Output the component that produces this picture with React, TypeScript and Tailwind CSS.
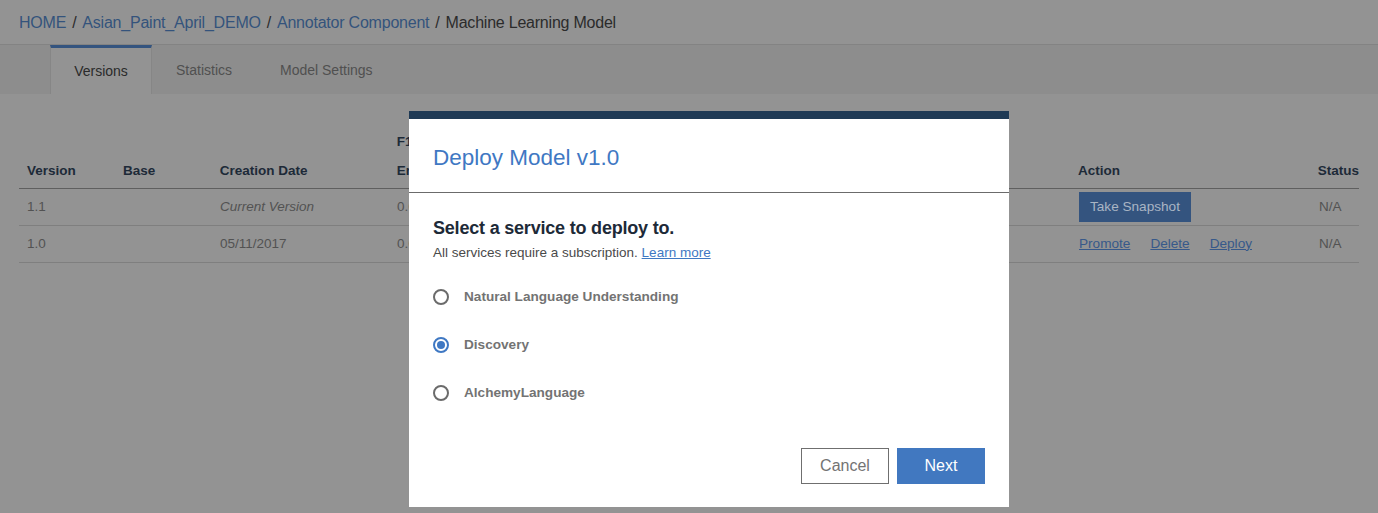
import React from "react";

const font = { fontFamily: '"Liberation Sans", Arial, sans-serif' };

function Radio({ checked, label }: { checked?: boolean; label: string }) {
  return (
    <div className="flex items-center h-[20px]">
      {checked ? (
        <span className="w-[16px] h-[16px] rounded-full border-2 border-[#3f78c3] flex items-center justify-center">
          <span className="w-[8px] h-[8px] rounded-full bg-[#3f78c3]" />
        </span>
      ) : (
        <span className="w-[16px] h-[16px] rounded-full border-2 border-[#6b6b6b]" />
      )}
      <span className="ml-[15px] text-[13.6px] font-bold text-[#737373]">{label}</span>
    </div>
  );
}

export default function App() {
  return (
    <div className="relative w-[1378px] h-[513px] overflow-hidden bg-[#939393]" style={font}>
      {/* breadcrumb */}
      <div className="h-[45px] flex items-center pl-[19px] pt-[2px] text-[16px] tracking-[-0.22px] border-b border-[#838383]">
        <span className="text-[#34537c]">HOME</span>
        <span className="text-[#2b2b2b] mx-[6px]">/</span>
        <span className="text-[#34537c]">Asian_Paint_April_DEMO</span>
        <span className="text-[#2b2b2b] mx-[6px]">/</span>
        <span className="text-[#34537c]">Annotator Component</span>
        <span className="text-[#2b2b2b] mx-[6px]">/</span>
        <span className="text-[#2b2b2b]">Machine Learning Model</span>
      </div>
      {/* tabs */}
      <div className="h-[49px] bg-[#8d8d8d] flex pl-[50px] text-[14px]">
        <div className="w-[102px] bg-[#939393] border-t-[3px] border-[#34547f] border-x border-x-[#868686] flex items-center justify-center pt-[1px] text-[#2a2a2a]">
          Versions
        </div>
        <div className="px-[24px] flex items-center pt-[1px] text-[#505050]">Statistics</div>
        <div className="px-[24px] flex items-center pt-[1px] text-[#505050]">Model Settings</div>
      </div>
      {/* table */}
      <div className="mx-[19px] mt-[38px] text-[13.5px]">
        <div className="flex h-[57px] border-b border-[#5f5f5f] text-[#1d2a38] font-bold">
          <div className="w-[104px] pl-[8px] self-end pb-[7px]">Version</div>
          <div className="w-[97px] self-end pb-[7px]">Base</div>
          <div className="w-[177px] self-end pb-[7px]">Creation Date</div>
          <div className="w-[682px] flex flex-col justify-end pb-[7px] gap-[9px]">
            <span>F1</span>
            <span>Engine</span>
          </div>
          <div className="w-[240px] self-end pb-[7px]">Action</div>
          <div className="self-end pb-[7px]">Status</div>
        </div>
        <div className="flex h-[37px] items-center border-b border-[#7f7f7f] text-[#525252]">
          <div className="w-[104px] pl-[8px]">1.1</div>
          <div className="w-[97px]"></div>
          <div className="w-[177px] italic">Current Version</div>
          <div className="w-[682px]">0.6</div>
          <div className="w-[240px]">
            <span className="inline-flex items-center h-[30px] bg-[#34547f] text-[#a9b5c4] px-[11px] text-[13.6px]">Take Snapshot</span>
          </div>
          <div>N/A</div>
        </div>
        <div className="flex h-[37px] items-center border-b border-[#7f7f7f] text-[#525252]">
          <div className="w-[104px] pl-[8px]">1.0</div>
          <div className="w-[97px]"></div>
          <div className="w-[177px]">05/11/2017</div>
          <div className="w-[682px]">0.6</div>
          <div className="w-[240px] flex gap-[20px] text-[13.6px] text-[#37598a] underline">
            <span>Promote</span>
            <span>Delete</span>
            <span>Deploy</span>
          </div>
          <div>N/A</div>
        </div>
      </div>

      {/* modal */}
      <div className="absolute left-[409px] top-[111px] w-[600px] h-[396px] bg-white border-t-[8px] border-[#1f3a55] flex flex-col">
        <div className="h-[74px] border-b border-[#6b6b6b] flex items-center pl-[24px] pt-[4px]">
          <span className="text-[22.5px] text-[#3f78c3]">Deploy Model v1.0</span>
        </div>
        <div className="pl-[24px] pt-[23px]">
          <div className="text-[18px] tracking-[-0.2px] font-bold text-[#1d2a38] leading-[24px]">Select a service to deploy to.</div>
          <div className="text-[13.5px] text-[#4a4a4a] mt-[3px]">
            All services require a subscription.{" "}
            <span className="text-[#3f78c3] underline">Learn more</span>
          </div>
          <div className="mt-[24px] flex flex-col gap-[28px]">
            <Radio label="Natural Language Understanding" />
            <Radio checked label="Discovery" />
            <Radio label="AlchemyLanguage" />
          </div>
        </div>
        <div className="mt-auto mb-[23px] mr-[24px] flex justify-end gap-[8px]">
          <button className="w-[88px] h-[36px] border border-[#6f6f6f] text-[#737373] text-[16px]">Cancel</button>
          <button className="w-[88px] h-[36px] bg-[#4178c0] text-white text-[16px]">Next</button>
        </div>
      </div>
    </div>
  );
}
